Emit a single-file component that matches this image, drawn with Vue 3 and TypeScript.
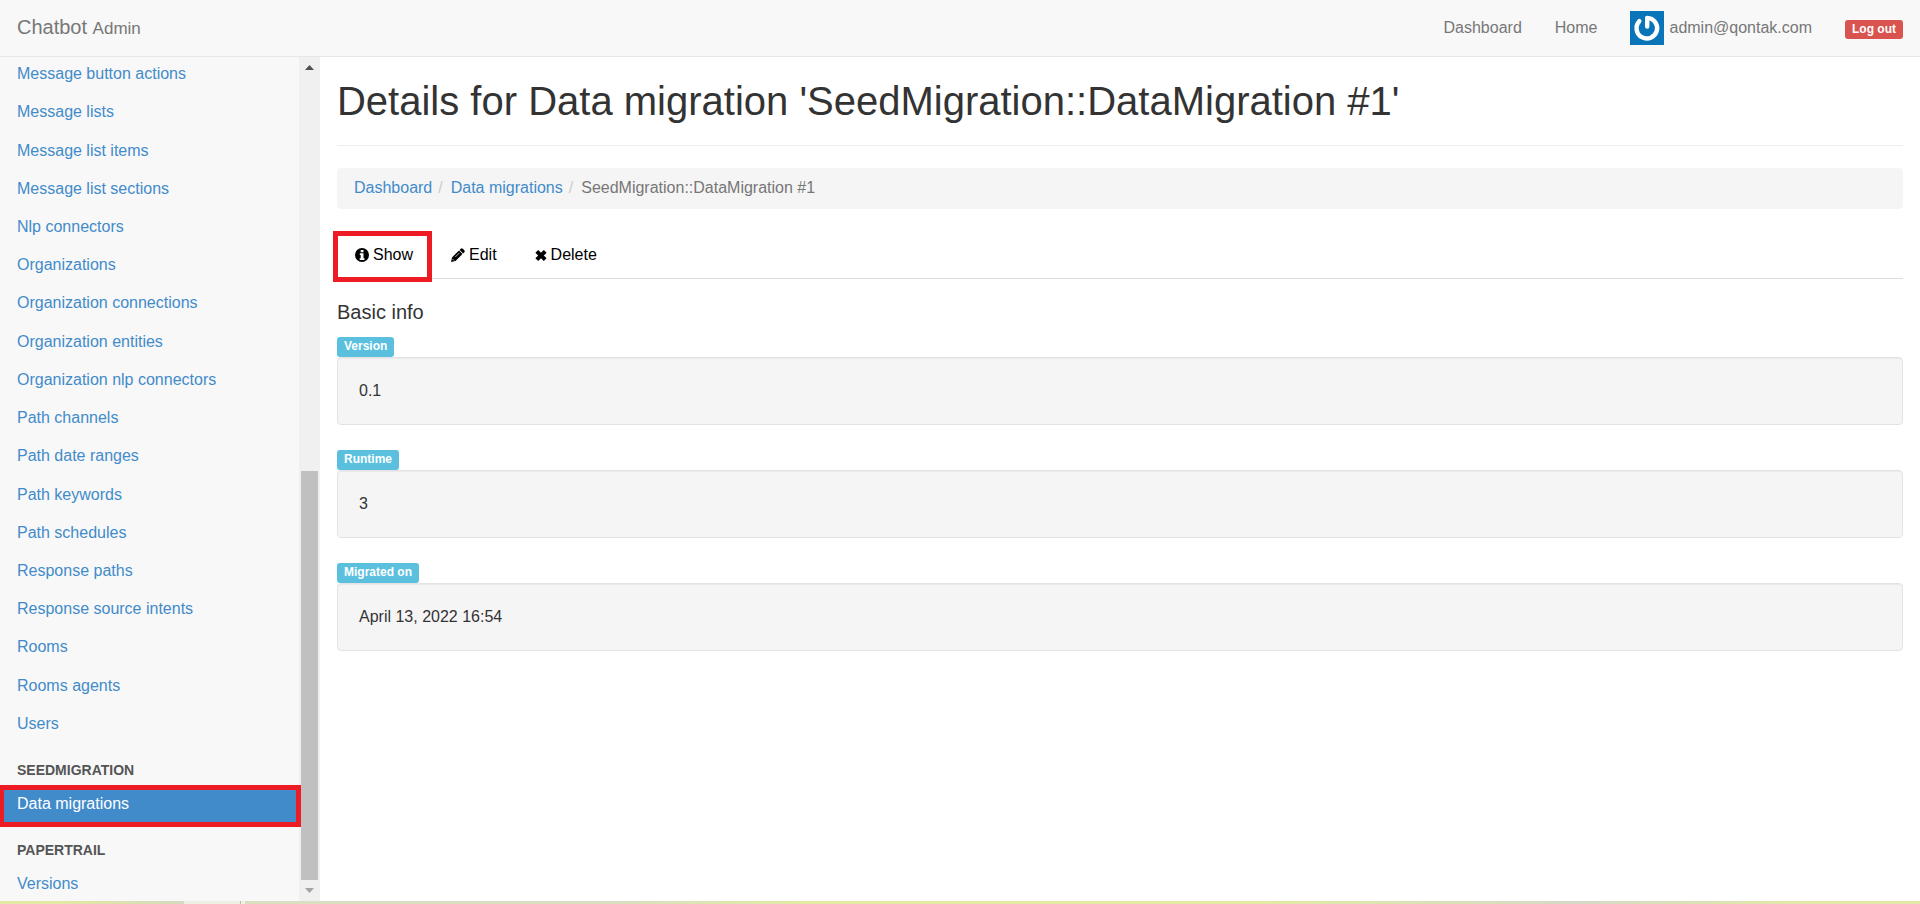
<script setup lang="ts">
interface Field { label: string; value: string }

const models: string[] = [
  'Message button actions', 'Message lists', 'Message list items', 'Message list sections',
  'Nlp connectors', 'Organizations', 'Organization connections', 'Organization entities',
  'Organization nlp connectors', 'Path channels', 'Path date ranges', 'Path keywords',
  'Path schedules', 'Response paths', 'Response source intents', 'Rooms', 'Rooms agents', 'Users',
]

const fields: Field[] = [
  { label: 'Version', value: '0.1' },
  { label: 'Runtime', value: '3' },
  { label: 'Migrated on', value: 'April 13, 2022 16:54' },
]
</script>

<template>
  <div class="page">
    <header class="navbar">
      <a class="brand" href="#">Chatbot <small>Admin</small></a>
      <nav class="top-links">
        <a href="#">Dashboard</a>
        <a href="#">Home</a>
        <a class="account" href="#">
          <svg class="avatar" viewBox="0 0 34 34" aria-hidden="true">
            <rect width="34" height="34" fill="#0a74b8" />
            <path d="M9.300 10.200A10.300 10.300 0 1 0 17.200 6.900V15.500" fill="none" stroke="#fff" stroke-width="4.400" stroke-linecap="round" stroke-linejoin="round" />
          </svg>
          <span>admin@qontak.com</span>
        </a>
        <button class="logout" type="button">Log out</button>
      </nav>
    </header>

    <div class="body">
      <aside class="sidebar">
        <nav class="side-nav">
          <ul class="models">
            <li v-for="m in models" :key="m"><a href="#">{{ m }}</a></li>
          </ul>
          <h2 class="group first">SEEDMIGRATION</h2>
          <a class="active" href="#">Data migrations</a>
          <h2 class="group">PAPERTRAIL</h2>
          <a class="side-link" href="#">Versions</a>
        </nav>
        <div class="scrollbar" aria-hidden="true">
          <svg class="arrow" viewBox="0 0 21 21"><path d="M6 13h9l-4.500-5z" fill="#505050" /></svg>
          <div class="track"><div class="thumb"></div></div>
          <svg class="arrow" viewBox="0 0 21 21"><path d="M6 8h9l-4.500 5z" fill="#a3a3a3" /></svg>
        </div>
      </aside>

      <main class="content">
        <h1>Details for Data migration 'SeedMigration::DataMigration #1'</h1>
        <ol class="breadcrumb">
          <li><a href="#">Dashboard</a></li>
          <li><a href="#">Data migrations</a></li>
          <li>SeedMigration::DataMigration #1</li>
        </ol>
        <nav class="tabs">
          <a class="tab selected" href="#">
            <svg class="icon" viewBox="0 0 14 14" aria-hidden="true">
              <circle cx="7" cy="7" r="7" fill="#000" />
              <path d="M5.700 2h2.800v2.200H5.700zM4.800 5.300h3.700v4.900h1v1.700H4.700v-1.700h1V7h-.9z" fill="#fff" />
            </svg>
            <span>Show</span>
          </a>
          <a class="tab" href="#">
            <svg class="icon" viewBox="0 0 14 14" aria-hidden="true">
              <path d="M0 14l1-4.600L8 2.500 11.500 6l-7 7zM8.600 1.900l1.200-1.200q1-.9 2 0l1.500 1.500q.9 1 0 2l-1.200 1.200z" fill="#000" />
              <path d="M1.500 11l1.500 1.500M4.300 9l4.200-4.200" stroke="#fff" stroke-width=".7" />
            </svg>
            <span>Edit</span>
          </a>
          <a class="tab" href="#">
            <svg class="icon cross" viewBox="0 0 12 14" aria-hidden="true">
              <path d="M1.800 3.300l8.400 8.400M10.200 3.300l-8.400 8.400" stroke="#000" stroke-width="4" />
            </svg>
            <span>Delete</span>
          </a>
        </nav>
        <h2 class="section-title">Basic info</h2>
        <dl class="fields">
          <div v-for="f in fields" :key="f.label" class="field">
            <dt>{{ f.label }}</dt>
            <dd>{{ f.value }}</dd>
          </div>
        </dl>
      </main>
    </div>
    <footer class="strip"></footer>
  </div>
</template>

<style>
body { margin: 0; }
</style>

<style scoped>
.page {
  height: 100vh;
  display: flex;
  flex-direction: column;
  overflow: hidden;
  background: #fff;
  color: #333;
  font: 16px/22px "Liberation Sans", Arial, sans-serif;
}
.page * { box-sizing: border-box; }
a { color: #428bca; text-decoration: none; }
ul, ol, dl, dd, h1, h2 { margin: 0; padding: 0; list-style: none; }

.navbar {
  flex: none;
  height: 57px;
  padding: 0 17px;
  display: flex;
  align-items: center;
  justify-content: space-between;
  background: #f8f8f8;
  border-bottom: 1px solid #e7e7e7;
}
.navbar a { color: #777; }
.brand { font-size: 20px; }
.brand small { font-size: 17px; }
.top-links { display: flex; align-items: center; gap: 33px; }
.account { display: flex; align-items: center; gap: 5px; }
.avatar { width: 34px; height: 34px; }
.logout {
  margin-top: 2px;
  padding: 0 7px;
  height: 19px;
  border: 0;
  border-radius: 3px;
  background: #d9534f;
  color: #fff;
  font: bold 12px/19px "Liberation Sans", Arial, sans-serif;
}

.body { flex: 1; min-height: 0; display: flex; }
.sidebar {
  flex: none;
  width: calc(100% / 6);
  display: flex;
  background: #f8f8f8;
}
.side-nav { flex: 1; min-width: 0; display: flex; flex-direction: column; }
.models {
  flex: 1;
  min-height: 0;
  margin-top: -2px;
  display: grid;
  grid-auto-rows: 1fr;
}
.models li { display: flex; align-items: center; padding-left: 17px; min-height: 0; }
.group {
  padding: 13px 17px 4px;
  font-size: 14px;
  line-height: 21px;
  font-weight: bold;
  color: #555;
}
.group.first { padding-top: 17px; }
.active {
  position: relative;
  z-index: 1;
  margin-right: -2px;
  height: 42px;
  padding: 3px 13px;
  border: 5px solid #ed1c24;
  border-left-width: 4px;
  background: #428bca;
  color: #fff;
}
.side-link { height: 36px; padding: 8px 17px; }

.scrollbar { width: 21px; display: flex; flex-direction: column; background: #f0f0f0; }
.arrow { width: 21px; height: 21px; flex: none; }
.track { flex: 1; padding: 0 2px; display: flex; align-items: flex-end; }
.thumb { width: 100%; height: 51%; background: #c0c0c0; }

.content { flex: 1; min-width: 0; padding: 0 17px; }
h1 {
  padding: 22px 0;
  border-bottom: 1px solid #eee;
  font-size: 40px;
  line-height: 44px;
  font-weight: normal;
}
.breadcrumb {
  display: flex;
  margin-top: 22px;
  padding: 9px 17px 10px;
  border-radius: 4px;
  background: #f5f5f5;
  color: #777;
}
.breadcrumb li + li::before { content: "/"; padding: 0 8px 0 6px; color: #ccc; }
.tabs {
  display: flex;
  height: 48px;
  margin-top: 22px;
  border-bottom: 1px solid #ddd;
}
.tab {
  display: flex;
  align-items: center;
  gap: 4px;
  height: 51px;
  padding: 0 19px 4px;
  color: #000;
}
.selected {
  position: relative;
  margin-left: -4px;
  padding: 0 14px 4px 17px;
  border: 5px solid #ed1c24;
  background: #fff;
}
.icon { width: 14px; height: 14px; flex: none; }
.cross { width: 12px; }
.section-title { margin-top: 21px; font-size: 20px; line-height: 24px; font-weight: normal; }
.fields { display: grid; gap: 25px; margin-top: 13px; }
dt {
  width: fit-content;
  height: 20px;
  padding: 0 7px;
  border-radius: 3px;
  background: #5bc0de;
  color: #fff;
  font-size: 12px;
  line-height: 18px;
  font-weight: bold;
}
dd {
  height: 68px;
  padding: 22px 21px;
  border: 1px solid #e3e3e3;
  border-radius: 4px;
  background: #f5f5f5;
  box-shadow: inset 0 1px 1px rgba(0, 0, 0, .05);
}
.strip {
  flex: none;
  height: 3px;
  background: linear-gradient(90deg, #e3e8a4 0 60px, #d5d9bf 184px, #eef0e6 184px 240px, #b9c09a 240px 241px, #eef0e6 241px 245px, #d9dfc0 245px, #d9dfc0 32%, #e2eaa4 42%, #e2eaa4 66%, #d5d9c6 82%, #e2e8a8 94%);
}
</style>
